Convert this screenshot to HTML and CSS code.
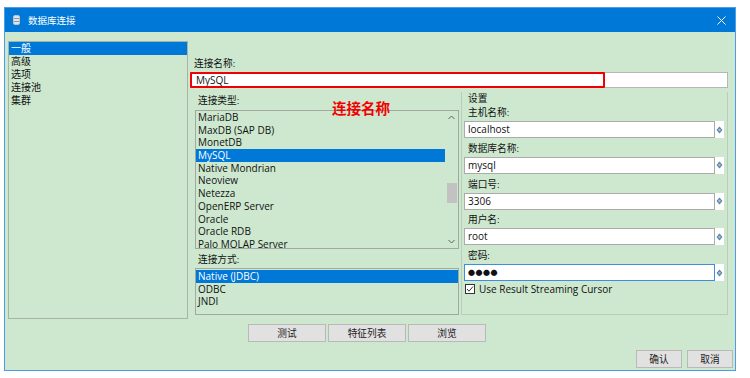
FILE: index.html
```html
<!DOCTYPE html>
<html lang="zh">
<head>
  <meta charset="UTF-8">
  <title>数据库连接</title>
  <link rel="stylesheet" href="styles.css">
</head>
<body>

<div class="window">
  <div class="titlebar">
    <svg class="app-icon" width="7" height="10" viewBox="0 0 7 10">
      <rect x="0.5" y="0.5" width="6" height="9" rx="1.5" fill="#dfe6ee" stroke="#b8c4d0"/>
      <line x1="1" y1="3.5" x2="6" y2="3.5" stroke="#8a96a4"/>
      <line x1="1" y1="6.5" x2="6" y2="6.5" stroke="#8a96a4"/>
    </svg>
    <span class="title">数据库连接</span>
    <svg class="close" width="9" height="9" viewBox="0 0 9 9">
      <path d="M0.5 0.5 L8.5 8.5 M8.5 0.5 L0.5 8.5" stroke="#fff" stroke-width="1"/>
    </svg>
  </div>

  <div class="body">
    <div class="nav-list">
      <div class="row selected">一般</div>
      <div class="row">高级</div>
      <div class="row">选项</div>
      <div class="row">连接池</div>
      <div class="row">集群</div>
    </div>

    <div class="main">
      <div class="label">连接名称:</div>
      <div class="name-field">
        <span>MySQL</span>
        <div class="mark-box"></div>
      </div>

      <div class="lower">
        <div class="left-col">
          <div class="label type-label">连接类型:</div>
          <div class="list type-list">
            <div class="rows">
              <div class="row">MariaDB</div>
              <div class="row">MaxDB (SAP DB)</div>
              <div class="row">MonetDB</div>
              <div class="row selected">MySQL</div>
              <div class="row">Native Mondrian</div>
              <div class="row">Neoview</div>
              <div class="row">Netezza</div>
              <div class="row">OpenERP Server</div>
              <div class="row">Oracle</div>
              <div class="row">Oracle RDB</div>
              <div class="row">Palo MOLAP Server</div>
            </div>
            <div class="scrollbar">
              <svg width="7" height="5" viewBox="0 0 7 5"><path d="M0.5 4 L3.5 1 L6.5 4" fill="none" stroke="#606060"/></svg>
              <div class="track"><div class="thumb"></div></div>
              <svg width="7" height="5" viewBox="0 0 7 5"><path d="M0.5 1 L3.5 4 L6.5 1" fill="none" stroke="#606060"/></svg>
            </div>
          </div>
          <div class="label method-label">连接方式:</div>
          <div class="list method-list">
            <div class="row selected">Native (JDBC)</div>
            <div class="row">ODBC</div>
            <div class="row">JNDI</div>
          </div>
        </div>

        <div class="settings">
          <div class="legend">设置</div>
          <div class="field">
            <div class="field-label">主机名称:</div>
            <div class="field-row"><div class="input">localhost</div><span class="var-icon"><svg width="7" height="8" viewBox="0 0 7 8"><path d="M3.5 0.5 L6.5 4 L3.5 7.5 L0.5 4 Z" fill="#5d85aa"/><circle cx="3.5" cy="4" r="1.2" fill="#a9c2da"/></svg></span></div>
          </div>
          <div class="field">
            <div class="field-label">数据库名称:</div>
            <div class="field-row"><div class="input">mysql</div><span class="var-icon"><svg width="7" height="8" viewBox="0 0 7 8"><path d="M3.5 0.5 L6.5 4 L3.5 7.5 L0.5 4 Z" fill="#5d85aa"/><circle cx="3.5" cy="4" r="1.2" fill="#a9c2da"/></svg></span></div>
          </div>
          <div class="field">
            <div class="field-label">端口号:</div>
            <div class="field-row"><div class="input">3306</div><span class="var-icon"><svg width="7" height="8" viewBox="0 0 7 8"><path d="M3.5 0.5 L6.5 4 L3.5 7.5 L0.5 4 Z" fill="#5d85aa"/><circle cx="3.5" cy="4" r="1.2" fill="#a9c2da"/></svg></span></div>
          </div>
          <div class="field">
            <div class="field-label">用户名:</div>
            <div class="field-row"><div class="input">root</div><span class="var-icon"><svg width="7" height="8" viewBox="0 0 7 8"><path d="M3.5 0.5 L6.5 4 L3.5 7.5 L0.5 4 Z" fill="#5d85aa"/><circle cx="3.5" cy="4" r="1.2" fill="#a9c2da"/></svg></span></div>
          </div>
          <div class="field">
            <div class="field-label">密码:</div>
            <div class="field-row"><div class="input focused password">●●●●</div><span class="var-icon"><svg width="7" height="8" viewBox="0 0 7 8"><path d="M3.5 0.5 L6.5 4 L3.5 7.5 L0.5 4 Z" fill="#5d85aa"/><circle cx="3.5" cy="4" r="1.2" fill="#a9c2da"/></svg></span></div>
          </div>
          <div class="check">
            <svg width="10" height="10" viewBox="0 0 10 10">
              <rect x="0.5" y="0.5" width="9" height="9" fill="#fff" stroke="#333"/>
              <path d="M2 5 L4 7.2 L8 2.5" fill="none" stroke="#333" stroke-width="1"/>
            </svg>
            <span>Use Result Streaming Cursor</span>
          </div>
        </div>

        <div class="annotation">连接名称</div>
      </div>

      <div class="actions">
        <button class="btn wide">测试</button>
        <button class="btn wide">特征列表</button>
        <button class="btn wide">浏览</button>
      </div>
    </div>
  </div>

  <div class="footer">
    <button class="btn small">确认</button>
    <button class="btn small">取消</button>
  </div>
</div>

</body>
</html>
```

FILE: styles.css
```css
body {
  margin: 0;
  background: #fff;
  font-family: "Open Sans", "Noto Sans CJK SC", sans-serif;
  font-size: 10px;
  color: #111;
}

.window {
  margin: 7px 0 0 4px;
  width: 732px;
  height: 364px;
  box-sizing: border-box;
  border: 1px solid #4d9de6;
  background: #cde8cf;
}

.titlebar {
  height: 24px;
  background: #0078d7;
  display: flex;
  align-items: center;
  padding-left: 8px;
}

.app-icon {
  margin-right: 8px;
}

.title {
  color: #fff;
  font-size: 9.5px;
  flex: 1;
}

.close {
  margin-right: 9px;
}

.body {
  display: flex;
  padding: 9px 6px 0 3px;
}

.row {
  height: 13px;
  line-height: 13px;
  padding-left: 2px;
  white-space: nowrap;
}

.row.selected {
  background: #0078d7;
  color: #fff;
}

.nav-list {
  width: 180px;
  height: 278px;
  box-sizing: border-box;
  border: 1px solid #a6b4a8;
  font-size: 10px;
}

.main {
  margin-left: 2px;
  width: 538px;
}

.label {
  height: 13px;
  line-height: 13px;
  padding-left: 4px;
  font-size: 9.7px;
}

.main > .label {
  margin-top: 16px;
}

.name-field {
  position: relative;
  margin-top: 2px;
  height: 16px;
  box-sizing: border-box;
  border: 1px solid #b6b6b6;
  background: #fff;
  line-height: 14px;
  padding-left: 5px;
}

.mark-box {
  position: absolute;
  left: -1px;
  top: -1px;
  width: 415px;
  height: 16px;
  box-sizing: border-box;
  border: 2px solid #f00000;
  border-radius: 1px;
}

.lower {
  position: relative;
  display: flex;
  margin-top: 4px;
}

.left-col {
  margin-left: 5px;
  width: 264px;
}

.left-col .label {
  padding-left: 3px;
}

.type-label {
  margin-top: 2px;
}

.method-label {
  margin-top: 4px;
}

.list {
  box-sizing: border-box;
  border: 1px solid #a0a8a0;
  margin-top: 3px;
}

.list .row {
  height: 12.7px;
  line-height: 12.7px;
}

.type-list {
  height: 139px;
  display: flex;
}

.type-list .rows {
  flex: 1;
}

.scrollbar {
  width: 13px;
  display: flex;
  flex-direction: column;
  align-items: center;
  padding: 4px 0;
  box-sizing: border-box;
}

.scrollbar .track {
  flex: 1;
  width: 100%;
  padding-top: 63px;
  box-sizing: border-box;
}

.thumb {
  width: 10px;
  height: 20px;
  margin: 0 auto;
  background: #c2c2c2;
}

.method-list {
  height: 47px;
  margin-top: 2px;
  padding-top: 1px;
}

.settings {
  margin-left: 2px;
  width: 267px;
  height: 223px;
  box-sizing: border-box;
  border: 1px solid #b7cfb9;
  border-top: none;
  padding-left: 2px;
}

.legend {
  height: 14px;
  line-height: 14px;
  padding-left: 4px;
  font-size: 9.7px;
}

.field {
  margin-bottom: 3.75px;
}

.field-label {
  height: 14px;
  line-height: 14px;
  padding-left: 4px;
  font-size: 9.7px;
  margin-bottom: 1px;
}

.field-row {
  display: flex;
  align-items: center;
}

.input {
  width: 251px;
  height: 17px;
  box-sizing: border-box;
  border: 1px solid #ababab;
  background: #fff;
  line-height: 15px;
  padding-left: 3px;
}

.input.focused {
  border-color: #3d8ee0;
}

.input.password {
  font-size: 7px;
  letter-spacing: 0.5px;
}

.var-icon {
  width: 9px;
  height: 17px;
  background: #fff;
  display: flex;
  align-items: center;
  justify-content: center;
}

.check {
  display: flex;
  align-items: center;
  margin-top: -3px;
  padding-left: 1px;
}

.check span {
  margin-left: 4px;
}

.annotation {
  position: absolute;
  left: 142px;
  top: 8px;
  color: #f20000;
  font-family: "Noto Sans CJK SC", sans-serif;
  font-weight: bold;
  font-size: 14.5px;
  line-height: 16px;
}

.btn {
  font-family: "Noto Sans CJK SC", sans-serif;
  font-size: 9.7px;
  color: #222;
  background: #e1e1e1;
  border: 1px solid #b9b9b9;
  height: 18px;
  padding: 0;
  margin: 0;
}

.actions {
  display: flex;
  gap: 2px;
  margin: 9px 0 0 58px;
}

.btn.wide {
  width: 78px;
}

.footer {
  display: flex;
  justify-content: flex-end;
  gap: 5px;
  margin-top: 8px;
  padding-right: 2px;
}

.btn.small {
  width: 46px;
}
```
